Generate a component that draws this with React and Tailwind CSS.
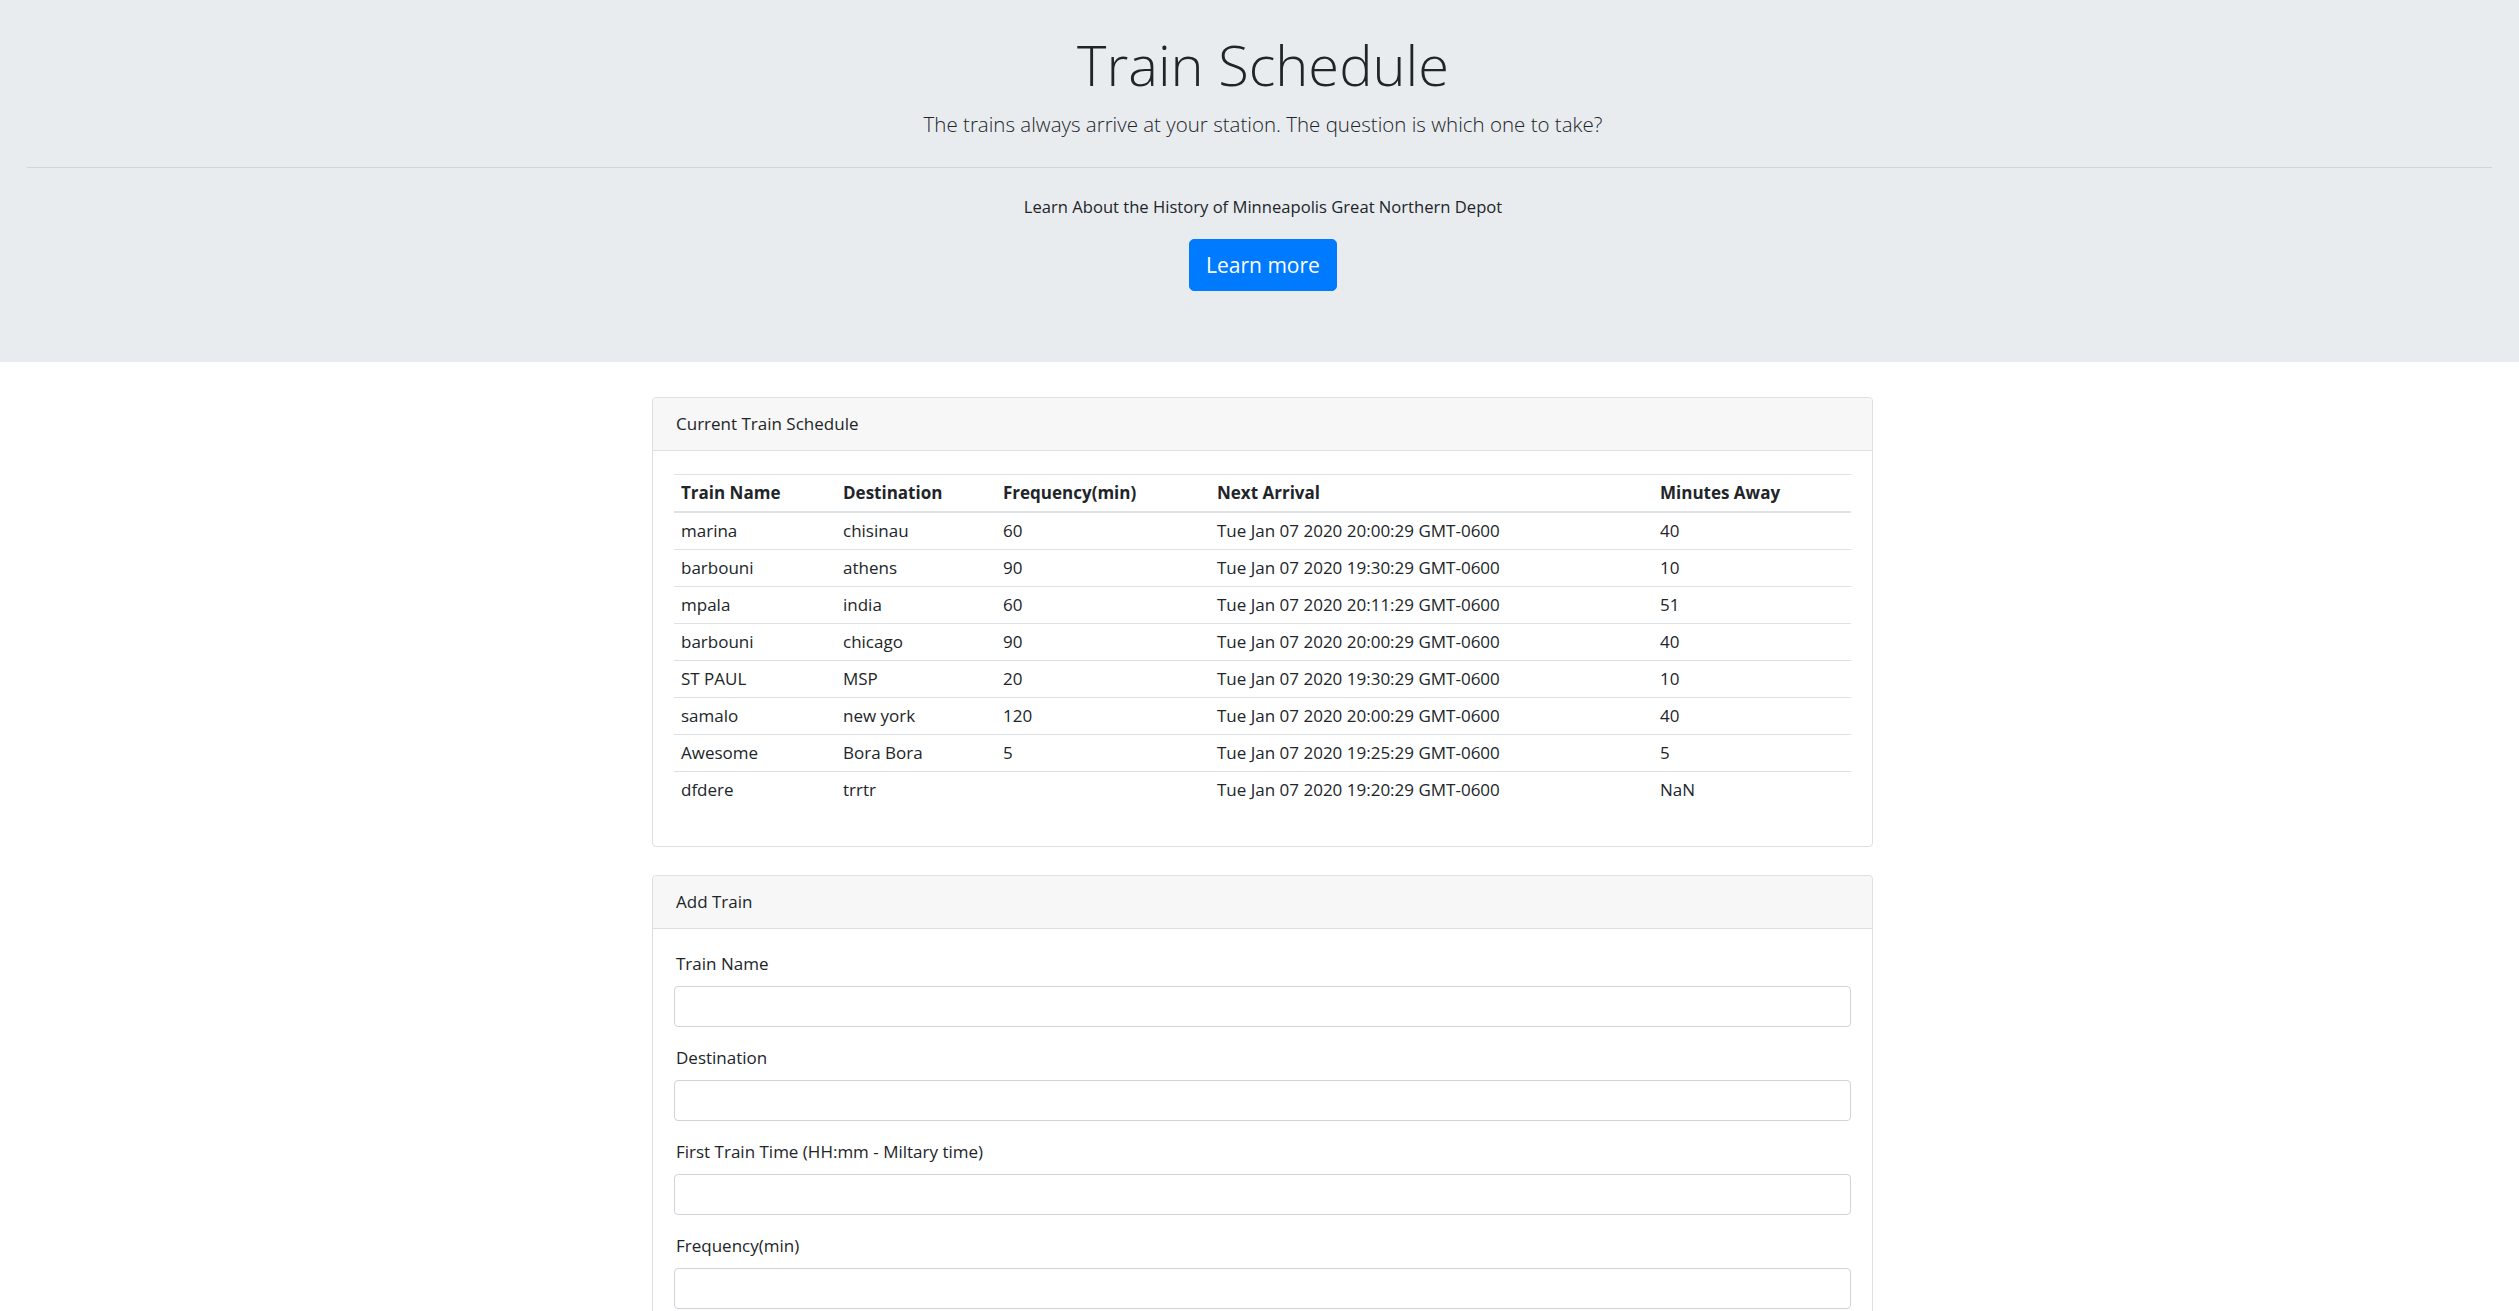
import { useState } from 'react'

const trains = [
  { name: 'marina', destination: 'chisinau', frequency: '60', next: 'Tue Jan 07 2020 20:00:29 GMT-0600', away: '40' },
  { name: 'barbouni', destination: 'athens', frequency: '90', next: 'Tue Jan 07 2020 19:30:29 GMT-0600', away: '10' },
  { name: 'mpala', destination: 'india', frequency: '60', next: 'Tue Jan 07 2020 20:11:29 GMT-0600', away: '51' },
  { name: 'barbouni', destination: 'chicago', frequency: '90', next: 'Tue Jan 07 2020 20:00:29 GMT-0600', away: '40' },
  { name: 'ST PAUL', destination: 'MSP', frequency: '20', next: 'Tue Jan 07 2020 19:30:29 GMT-0600', away: '10' },
  { name: 'samalo', destination: 'new york', frequency: '120', next: 'Tue Jan 07 2020 20:00:29 GMT-0600', away: '40' },
  { name: 'Awesome', destination: 'Bora Bora', frequency: '5', next: 'Tue Jan 07 2020 19:25:29 GMT-0600', away: '5' },
  { name: 'dfdere', destination: 'trrtr', frequency: '', next: 'Tue Jan 07 2020 19:20:29 GMT-0600', away: 'NaN' },
]

const fields = [
  { id: 'train-name', label: 'Train Name' },
  { id: 'destination', label: 'Destination' },
  { id: 'first-train', label: 'First Train Time (HH:mm - Miltary time)' },
  { id: 'frequency', label: 'Frequency(min)' },
]

function Card({ title, children, className = '' }) {
  return (
    <div className={`bg-white border border-[#dfdfdf] rounded-[4px] ${className}`}>
      <div className="bg-[#f7f7f7] border-b border-[#dfdfdf] rounded-t-[4px] px-[23px] py-[13px] leading-[26px] text-[17px]">
        {title}
      </div>
      {children}
    </div>
  )
}

export default function App() {
  const [form, setForm] = useState({})

  return (
    <div className="min-h-screen bg-white font-['Open_Sans',sans-serif] text-[#212529]">
      {/* Jumbotron */}
      <div className="bg-[#e9ecef] px-[27px] pt-[28px] pb-[71px] text-center">
        <div className="pl-[7px]">
          <h1 className="text-[56px] font-light leading-[72px] mb-[8px]">Train Schedule</h1>
          <p className="text-[20.5px] font-light leading-[32px]">
            The trains always arrive at your station. The question is which one to take?
          </p>
        </div>
        <hr className="mt-[27px] mb-[26px] border-t border-[#d3d5d8]" />
        <div className="pl-[7px]">
          <p className="text-[16.6px] leading-[26px] mb-[19px]">
            Learn About the History of Minneapolis Great Northern Depot
          </p>
          <a
            href="#"
            className="inline-block bg-[#007bff] border border-[#007bff] text-white text-[21px] leading-[32px] px-[16px] py-[9px] rounded-[5px]"
          >
            Learn more
          </a>
        </div>
      </div>

      {/* Main */}
      <div className="mx-auto w-[1227px] pl-[6px] pt-[35px] pb-[40px]">
        <Card title="Current Train Schedule">
          <div className="px-[21px] pt-[23px] pb-[21px]">
            <table className="w-full table-fixed text-[17px] mb-[17px]">
              <colgroup>
                <col className="w-[162px]" />
                <col className="w-[160px]" />
                <col className="w-[214px]" />
                <col className="w-[443px]" />
                <col />
              </colgroup>
              <thead>
                <tr>
                  {['Train Name', 'Destination', 'Frequency(min)', 'Next Arrival', 'Minutes Away'].map((h) => (
                    <th
                      key={h}
                      className="text-left font-bold pl-[7px] pr-[5px] py-[5px] leading-[26px] border-t border-b-2 border-[#dee2e6]"
                    >
                      {h}
                    </th>
                  ))}
                </tr>
              </thead>
              <tbody>
                {trains.map((t, i) => (
                  <tr key={i}>
                    <td className="pl-[7px] pr-[5px] py-[5px] leading-[26px] border-t border-[#dee2e6]">{t.name}</td>
                    <td className="pl-[7px] pr-[5px] py-[5px] leading-[26px] border-t border-[#dee2e6]">{t.destination}</td>
                    <td className="pl-[7px] pr-[5px] py-[5px] leading-[26px] border-t border-[#dee2e6]">{t.frequency}</td>
                    <td className="pl-[7px] pr-[5px] py-[5px] leading-[26px] border-t border-[#dee2e6]">{t.next}</td>
                    <td className="pl-[7px] pr-[5px] py-[5px] leading-[26px] border-t border-[#dee2e6]">{t.away}</td>
                  </tr>
                ))}
              </tbody>
            </table>
          </div>
        </Card>

        <Card title="Add Train" className="mt-[28px]">
          <form className="px-[21px] pt-[22px] pb-[21px]" onSubmit={(e) => e.preventDefault()}>
            {fields.map((f) => (
              <div key={f.id} className="mb-[18px]">
                <label htmlFor={f.id} className="block pl-[2px] text-[17px] leading-[26px] mb-[9px]">
                  {f.label}
                </label>
                <input
                  id={f.id}
                  type="text"
                  value={form[f.id] || ''}
                  onChange={(e) => setForm({ ...form, [f.id]: e.target.value })}
                  className="block w-full h-[41px] px-[13px] text-[17px] bg-white border border-[#ced4da] rounded-[4px] outline-none"
                />
              </div>
            ))}
          </form>
        </Card>
      </div>
    </div>
  )
}
